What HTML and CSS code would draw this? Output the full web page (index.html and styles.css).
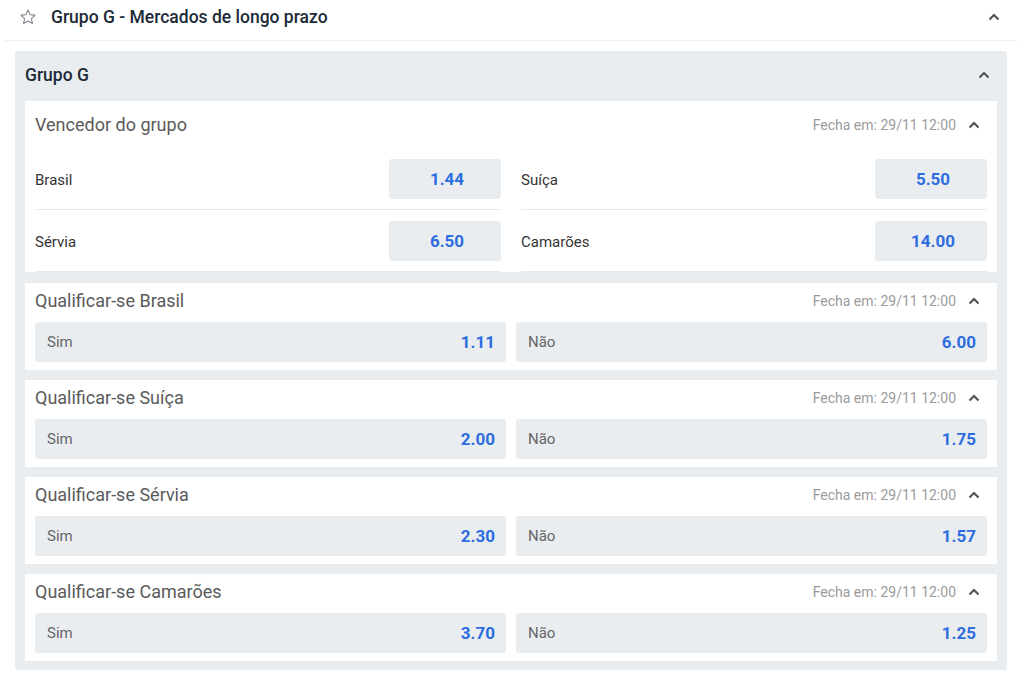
FILE: index.html
```html
<!DOCTYPE html>
<html lang="pt">
<head>
    <meta charset="UTF-8">
    <meta name="viewport" content="width=device-width, initial-scale=1.0">
    <title>Grupo G - Mercados de longo prazo</title>
    <link rel="stylesheet" href="styles.css">
</head>
<body>
    <div class="wrap">
        <div class="top">
            <svg class="star" width="18" height="18" viewBox="0 0 24 24"><path d="M12 2.8l2.8 6.1 6.6.7-4.9 4.5 1.4 6.6L12 17.3l-5.9 3.4 1.4-6.6-4.9-4.5 6.6-.7z" fill="none" stroke="#8a8f96" stroke-width="1.6" stroke-linejoin="round"/></svg>
            <h1>Grupo G - Mercados de longo prazo</h1>
            <svg class="chev" width="12" height="8" viewBox="0 0 12 8"><path d="M1.5 6.5L6 2l4.5 4.5" fill="none" stroke="#555" stroke-width="2.2"/></svg>
        </div>

        <div class="group">
            <div class="group-head">
                <h2>Grupo G</h2>
                <svg class="chev" width="12" height="8" viewBox="0 0 12 8"><path d="M1.5 6.5L6 2l4.5 4.5" fill="none" stroke="#555" stroke-width="2.2"/></svg>
            </div>

            <div class="card winner">
                <div class="card-head">
                    <span class="card-title">Vencedor do grupo</span>
                    <span class="close">Fecha em: 29/11 12:00</span>
                    <svg class="chev" width="12" height="8" viewBox="0 0 12 8"><path d="M1.5 6.5L6 2l4.5 4.5" fill="none" stroke="#555" stroke-width="2.2"/></svg>
                </div>
                <div class="teams">
                    <div class="team"><span>Brasil</span><button class="odd">1.44</button></div>
                    <div class="team"><span>Suíça</span><button class="odd">5.50</button></div>
                    <div class="team"><span>Sérvia</span><button class="odd">6.50</button></div>
                    <div class="team"><span>Camarões</span><button class="odd">14.00</button></div>
                </div>
            </div>

            <div class="card">
                <div class="card-head">
                    <span class="card-title">Qualificar-se Brasil</span>
                    <span class="close">Fecha em: 29/11 12:00</span>
                    <svg class="chev" width="12" height="8" viewBox="0 0 12 8"><path d="M1.5 6.5L6 2l4.5 4.5" fill="none" stroke="#555" stroke-width="2.2"/></svg>
                </div>
                <div class="picks">
                    <button class="pick"><span>Sim</span><b>1.11</b></button>
                    <button class="pick"><span>Não</span><b>6.00</b></button>
                </div>
            </div>

            <div class="card">
                <div class="card-head">
                    <span class="card-title">Qualificar-se Suíça</span>
                    <span class="close">Fecha em: 29/11 12:00</span>
                    <svg class="chev" width="12" height="8" viewBox="0 0 12 8"><path d="M1.5 6.5L6 2l4.5 4.5" fill="none" stroke="#555" stroke-width="2.2"/></svg>
                </div>
                <div class="picks">
                    <button class="pick"><span>Sim</span><b>2.00</b></button>
                    <button class="pick"><span>Não</span><b>1.75</b></button>
                </div>
            </div>

            <div class="card">
                <div class="card-head">
                    <span class="card-title">Qualificar-se Sérvia</span>
                    <span class="close">Fecha em: 29/11 12:00</span>
                    <svg class="chev" width="12" height="8" viewBox="0 0 12 8"><path d="M1.5 6.5L6 2l4.5 4.5" fill="none" stroke="#555" stroke-width="2.2"/></svg>
                </div>
                <div class="picks">
                    <button class="pick"><span>Sim</span><b>2.30</b></button>
                    <button class="pick"><span>Não</span><b>1.57</b></button>
                </div>
            </div>

            <div class="card">
                <div class="card-head">
                    <span class="card-title">Qualificar-se Camarões</span>
                    <span class="close">Fecha em: 29/11 12:00</span>
                    <svg class="chev" width="12" height="8" viewBox="0 0 12 8"><path d="M1.5 6.5L6 2l4.5 4.5" fill="none" stroke="#555" stroke-width="2.2"/></svg>
                </div>
                <div class="picks">
                    <button class="pick"><span>Sim</span><b>3.70</b></button>
                    <button class="pick"><span>Não</span><b>1.25</b></button>
                </div>
            </div>
        </div>
    </div>
</body>
</html>
```

FILE: styles.css
```css
* {
    box-sizing: border-box;
}
body {
    margin: 0;
    background: #fff;
    font-family: Roboto, "Liberation Sans", sans-serif;
    color: #333;
}
.wrap {
    margin: 0 7px 0 5px;
}
.top {
    display: flex;
    align-items: center;
    height: 41px;
    padding: 0 17px 0 14px;
    border-bottom: 1px solid #eceef0;
}
.star {
    margin-right: 14px;
    margin-top: -6px;
}
.top h1 {
    flex: 1;
    margin: 0;
    margin-top: -6px;
    font-size: 17.5px;
    font-weight: 500;
    color: #1c2a38;
}
.top .chev {
    margin-top: -6px;
}
.group {
    margin: 10px 10px 0 10px;
    padding: 0 10px 9px;
    background: #eaedf0;
    border-radius: 2px;
}
.group-head {
    display: flex;
    align-items: center;
    height: 50px;
    padding-right: 7px;
    padding-bottom: 2px;
}
.group-head h2 {
    flex: 1;
    margin: 0;
    font-size: 17.5px;
    font-weight: 500;
    color: #1c2a38;
}
.card {
    background: #fff;
    padding: 0 10px 8px;
    margin-bottom: 10px;
}
.card:last-child {
    margin-bottom: 0;
}
.card-head {
    display: flex;
    align-items: center;
    height: 39px;
    padding-right: 7px;
    padding-bottom: 4px;
}
.card-title {
    flex: 1;
    font-size: 18px;
    color: #5a5a5a;
}
.close {
    font-size: 14px;
    color: #9b9b9b;
    margin-right: 12px;
}
.winner {
    padding-bottom: 0;
    margin-bottom: 11px;
}
.winner .card-head {
    height: 47px;
    padding-bottom: 0;
}
.teams {
    display: grid;
    grid-template-columns: 1fr 1fr;
    column-gap: 20px;
}
.team {
    display: flex;
    align-items: center;
    justify-content: space-between;
    height: 62px;
    border-bottom: 1px solid #e8ebee;
    font-size: 15px;
    color: #333;
}
.team span {
    margin-top: 2px;
}
.odd {
    width: 112px;
    height: 40px;
    padding: 0 0 0 4px;
    border: none;
    border-radius: 3px;
    background: #eaedf0;
    font-family: inherit;
    font-size: 17px;
    font-weight: 700;
    color: #2e6de0;
}
.picks {
    display: grid;
    grid-template-columns: 1fr 1fr;
    gap: 10px;
}
.pick {
    display: flex;
    align-items: center;
    justify-content: space-between;
    height: 40px;
    padding: 0 11px 0 12px;
    border: none;
    border-radius: 3px;
    background: #eaedf0;
    font-family: inherit;
}
.pick span {
    font-size: 15px;
    color: #666;
}
.pick b {
    font-size: 17px;
    font-weight: 700;
    color: #2e6de0;
}
```
